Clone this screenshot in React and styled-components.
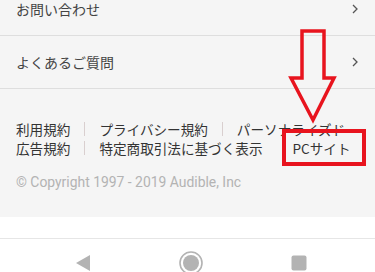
import React from "react";
import styled, { createGlobalStyle } from "styled-components";

//
// Global
//
const GlobalStyle = createGlobalStyle`
    html, body {
        margin: 0;
        padding: 0;
        background: #ffffff;
    }
    body {
        font-family: "Noto Sans CJK JP", "Noto Sans", Roboto, sans-serif;
        -webkit-font-smoothing: antialiased;
    }
`;

//
// Component Styles
//
const Screen = styled.div`
    position: relative;
    width: 375px;
    height: 272px;
    overflow: hidden;
    background: #ffffff;
`;

const Page = styled.div`
    background-color: #f5f5f5;
    margin-top: -17px;
`;

const MenuRow = styled.div`
    display: flex;
    align-items: center;
    justify-content: space-between;
    height: 52px;
    padding: 0 17px 0 16px;
    border-bottom: 1px solid #dedede;
    font-size: 14px;
    color: #444444;
`;

const Footer = styled.div`
    padding: 30px 0 25px 16px;
`;

const LinkRow = styled.div`
    display: flex;
    align-items: center;
    height: 19px;
    white-space: nowrap;
    overflow: hidden;
    font-size: 13.6px;
    color: #333333;
`;

const LinkItem = styled.span`
    margin-left: ${(props) => props.gap || 0}px;
`;

const Sep = styled.span`
    display: inline-block;
    width: 1px;
    height: 14px;
    margin: 0 14px;
    background-color: #d9cfcf;
`;

const Copyright = styled.div`
    margin-top: 16px;
    height: 19px;
    line-height: 19px;
    font-family: Roboto, "Noto Sans", sans-serif;
    font-size: 13.9px;
    color: #b3b3b3;
`;

const WhiteGap = styled.div`
    height: 21px;
    border-bottom: 1px solid #e6e6e6;
`;

const NavBar = styled.div`
    display: flex;
    align-items: center;
    justify-content: space-between;
    height: 48px;
    padding: 0 68px 0 75px;
`;

const Overlay = styled.svg`
    position: absolute;
    left: 0;
    top: 0;
    pointer-events: none;
`;

//
// Icons
//
const Chevron = () => (
    <svg width="6" height="10" viewBox="0 0 6 10">
        <path d="M1 1l4 4-4 4" fill="none" stroke="#555" strokeWidth="1.3" />
    </svg>
);

const BackIcon = () => (
    <svg width="16" height="18" viewBox="0 0 16 18">
        <path d="M15 1v16L1 9z" fill="#b3b3b3" />
    </svg>
);

const HomeIcon = () => (
    <svg width="26" height="26" viewBox="0 0 26 26">
        <circle cx="13" cy="13" r="11" fill="none" stroke="#b3b3b3" strokeWidth="1.6" />
        <circle cx="13" cy="13" r="8" fill="#b3b3b3" />
    </svg>
);

const RecentIcon = () => (
    <svg width="16" height="16" viewBox="0 0 16 16">
        <rect x="0.5" y="0.5" width="15" height="15" rx="2" fill="#b3b3b3" />
    </svg>
);

const App = () => {
    return (
        <Screen>
            <GlobalStyle />

            <Page>
                <MenuRow>
                    <span>お問い合わせ</span>
                    <Chevron />
                </MenuRow>
                <MenuRow>
                    <span>よくあるご質問</span>
                    <Chevron />
                </MenuRow>

                {/* Footer links */}
                <Footer>
                    <LinkRow>
                        <LinkItem>利用規約</LinkItem>
                        <Sep />
                        <LinkItem>プライバシー規約</LinkItem>
                        <Sep />
                        <LinkItem>パーソナライズド</LinkItem>
                    </LinkRow>
                    <LinkRow>
                        <LinkItem>広告規約</LinkItem>
                        <Sep />
                        <LinkItem>特定商取引法に基づく表示</LinkItem>
                        <LinkItem gap={30}>PCサイト</LinkItem>
                    </LinkRow>
                    <Copyright>© Copyright 1997 - 2019 Audible, Inc</Copyright>
                </Footer>
            </Page>

            <WhiteGap />

            <NavBar>
                <BackIcon />
                <HomeIcon />
                <RecentIcon />
            </NavBar>

            {/* Red annotation: arrow + box around PCサイト */}
            <Overlay width="375" height="272" viewBox="0 0 375 272">
                <path
                    d="M302 31H324V78H334L313 120L291 78H302Z"
                    fill="none"
                    stroke="#e8141e"
                    strokeWidth="3.5"
                    strokeLinejoin="miter"
                />
                <rect x="284" y="131" width="80" height="33" fill="none" stroke="#e8141e" strokeWidth="4" />
            </Overlay>
        </Screen>
    );
};

export default App;
